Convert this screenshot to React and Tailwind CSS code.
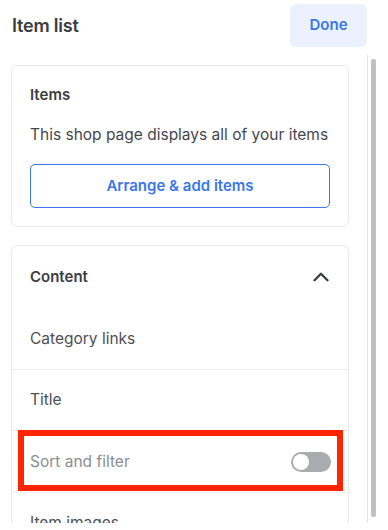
import { ChevronUp } from 'lucide-react'

const ROWS = ['Category links', 'Title']

function Toggle() {
  return (
    <span className="flex h-[20px] w-[40px] items-center rounded-full bg-[#a9abae] p-[2px]">
      <span className="h-[16px] w-[16px] rounded-full bg-white" />
    </span>
  )
}

export default function App() {
  return (
    <div className="h-[530px] w-[388px] bg-white">
      <div className="flex h-[523px] w-[388px] overflow-hidden font-['Inter',sans-serif] text-[#3a3d42]">
        <div className="w-[367px] shrink-0">
          {/* Header */}
          <div className="flex items-center justify-between pl-[12px] pt-[4px]">
            <h1 className="text-[18px] font-semibold tracking-[-0.2px]">Item list</h1>
            <button className="h-[43px] w-[77px] rounded-[6px] bg-[#ebf1fe] text-[15px] font-semibold text-[#3b76ea]">
              Done
            </button>
          </div>

          {/* Items card */}
          <div className="ml-[11px] mt-[18px] w-[338px] rounded-[6px] border border-[#e9e9eb] px-[18px] pb-[18px] pt-[17px]">
            <p className="text-[15px] font-semibold leading-[24px]">Items</p>
            <p className="mt-[16px] text-[15.5px] leading-[24px] text-[#45484d]">This shop page displays all of your items</p>
            <button className="mt-[17px] h-[44px] w-full rounded-[5px] border border-[#3b76ea] text-[15px] font-semibold text-[#3b76ea]">
              Arrange &amp; add items
            </button>
          </div>

          {/* Content card */}
          <div className="ml-[11px] mt-[18px] w-[338px] rounded-t-[6px] border border-b-0 border-[#e9e9eb]">
            <div className="flex h-[62px] items-center justify-between pl-[18px] pr-[14px]">
              <span className="text-[15px] font-semibold">Content</span>
              <ChevronUp size={26} strokeWidth={2.2} className="text-[#3a3d42]" />
            </div>
            {ROWS.map((r, i) => (
              <div key={r} className={`flex h-[61px] items-center px-[18px] text-[15.5px] text-[#4d5055] ${i ? 'border-t border-[#ededef]' : ''}`}>
                {r}
              </div>
            ))}
            <div className="relative flex h-[62px] items-center justify-between border-t border-[#ededef] pl-[18px] pr-[17px] text-[15.5px] text-[#8b8e93]">
              Sort and filter
              <Toggle />
              <span className="absolute bottom-[1px] left-[6px] right-[5px] top-[-1px] border-[6px] border-[#ff2400]" />
            </div>
            <div className="flex h-[61px] items-center border-t border-[#ededef] px-[18px] text-[15.5px] text-[#4d5055]">
              Item images
            </div>
          </div>
        </div>

        {/* Scrollbar */}
        <div className="mt-[55px] flex w-[9px] justify-end border-l border-[#e4e4e4] pb-[6px] pt-[4px]">
          <div className="w-[5px] rounded-[2px] bg-[#c1c1c1]" />
        </div>
      </div>
    </div>
  )
}
